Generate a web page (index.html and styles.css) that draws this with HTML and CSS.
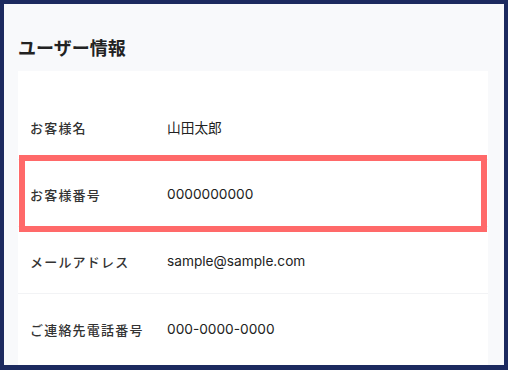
FILE: index.html
```html
<!DOCTYPE html>
<html lang="ja">
<head>
<meta charset="utf-8">
<title>ユーザー情報</title>
<link rel="stylesheet" href="styles.css">
</head>
<body>
<div class="frame">
  <h1 class="title">ユーザー情報</h1>
  <div class="card">
    <div class="row">
      <div class="label">お客様名</div>
      <div class="value">山田太郎</div>
    </div>
    <div class="row row-highlight">
      <div class="label">お客様番号</div>
      <div class="value">0000000000</div>
    </div>
    <div class="row">
      <div class="label">メールアドレス</div>
      <div class="value">sample@sample.com</div>
    </div>
    <div class="row row-last">
      <div class="label">ご連絡先電話番号</div>
      <div class="value">000-0000-0000</div>
    </div>
  </div>
</div>
</body>
</html>
```
FILE: styles.css
```css
html, body {
  margin: 0;
  padding: 0;
}
body {
  width: 508px;
  height: 370px;
  overflow: hidden;
  font-family: "Noto Sans CJK JP", "Noto Sans", sans-serif;
}
.frame {
  box-sizing: border-box;
  width: 508px;
  height: 370px;
  border: 4px solid #1c2a5f;
  border-bottom-width: 5px;
  background: #f8f9fb;
  padding: 30px 16px 0 14px;
  overflow: hidden;
}
.title {
  margin: 0 0 11px 0;
  font-size: 18px;
  line-height: 26px;
  font-weight: 700;
  color: #222;
}
.card {
  background: #fff;
  padding-top: 22px;
  height: 400px;
}
.row {
  position: relative;
  display: flex;
  align-items: center;
  box-sizing: border-box;
  height: 67px;
  padding: 2px 0 0 12px;
  border-bottom: 1px solid #f2f3f5;
}
.row-last {
  border-bottom: none;
  height: 70px;
  padding-top: 0;
}
.row-highlight::after {
  content: "";
  position: absolute;
  top: -5px;
  bottom: -6px;
  left: 1px;
  right: 1px;
  border: 6px solid #ff6969;
}
.label {
  width: 137px;
  font-size: 13px;
  letter-spacing: 1.2px;
  font-weight: 500;
  color: #333;
}
.value {
  font-family: "Inter", "Noto Sans CJK JP", sans-serif;
  font-size: 13.7px;
  color: #222;
}
```
